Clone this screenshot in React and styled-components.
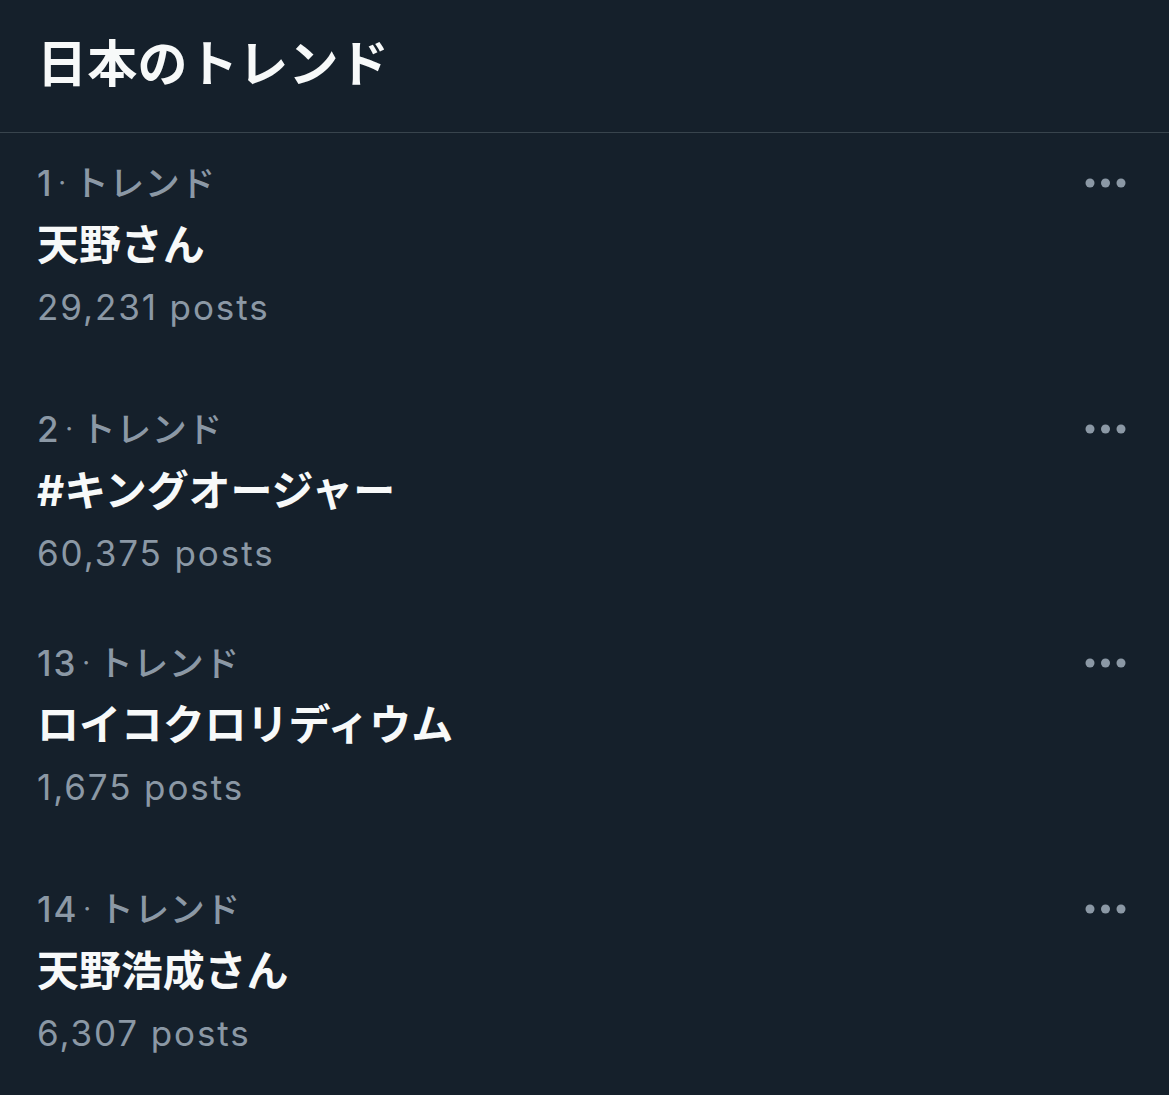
import React from "react";
import styled, { createGlobalStyle } from "styled-components";

const Global = createGlobalStyle`
  html, body { margin: 0; padding: 0; background: #15202b; }
  body { font-family: "Inter", "Noto Sans CJK JP", sans-serif; -webkit-font-smoothing: antialiased; }
`;

const Page = styled.div`
  width: 1169px;
  height: 1095px;
  background: #15202b;
  overflow: hidden;
`;

const Header = styled.header`
  height: 133px;
  box-sizing: border-box;
  display: flex;
  align-items: center;
  padding: 0 0 12px 37px;
  border-bottom: 1px solid #38444d;
`;

const Heading = styled.h1`
  margin: 0;
  font-size: 50px;
  font-weight: 700;
  color: #f7f9f9;
  letter-spacing: 0.3px;
`;

const List = styled.div`
  display: flex;
  flex-direction: column;
  padding-top: 19px;
`;

const Row = styled.div`
  display: flex;
  justify-content: space-between;
  align-items: flex-start;
  padding: 0 42px 0 37px;
  margin-bottom: ${(p) => p.$gap}px;
`;

const Texts = styled.div`
  display: flex;
  flex-direction: column;
`;

const Meta = styled.div`
  font-size: 35px;
  line-height: 62px;
  height: 62px;
  color: #8b98a5;
  font-weight: 500;
  display: flex;
  align-items: center;
`;

const Rank = styled.span`
  letter-spacing: 2px;
`;

const Dot = styled.span`
  margin: 0 8px 0 5px;
  font-size: 24px;
`;

const Label = styled.span`
  letter-spacing: 0.5px;
`;

const Title = styled.div`
  font-size: 42px;
  line-height: 62px;
  font-weight: 700;
  color: #f7f9f9;
  letter-spacing: -0.1px;
`;

const Count = styled.div`
  font-size: 35px;
  line-height: 62px;
  color: #8b98a5;
  letter-spacing: 1.9px;
`;

const More = styled.button`
  background: none;
  border: none;
  padding: 0;
  margin-top: 26px;
  display: flex;
  color: #8b98a5;
`;

const items = [
  { rank: "1", title: "天野さん", count: "29,231 posts", gap: 60 },
  { rank: "2", title: "#キングオージャー", count: "60,375 posts", gap: 48 },
  { rank: "13", title: "ロイコクロリディウム", count: "1,675 posts", gap: 60 },
  { rank: "14", title: "天野浩成さん", count: "6,307 posts", gap: 0 },
];

function Dots() {
  return (
    <svg width="42" height="10" viewBox="0 0 42 10" fill="currentColor">
      <circle cx="5" cy="5" r="4.5" />
      <circle cx="20.5" cy="5" r="4.5" />
      <circle cx="36" cy="5" r="4.5" />
    </svg>
  );
}

export default function App() {
  return (
    <Page>
      <Global />
      <Header>
        <Heading>日本のトレンド</Heading>
      </Header>
      <List>
        {items.map((it) => (
          <Row key={it.rank} $gap={it.gap}>
            <Texts>
              <Meta>
                <Rank>{it.rank}</Rank>
                <Dot>·</Dot>
                <Label>トレンド</Label>
              </Meta>
              <Title>{it.title}</Title>
              <Count>{it.count}</Count>
            </Texts>
            <More aria-label="more">
              <Dots />
            </More>
          </Row>
        ))}
      </List>
    </Page>
  );
}
